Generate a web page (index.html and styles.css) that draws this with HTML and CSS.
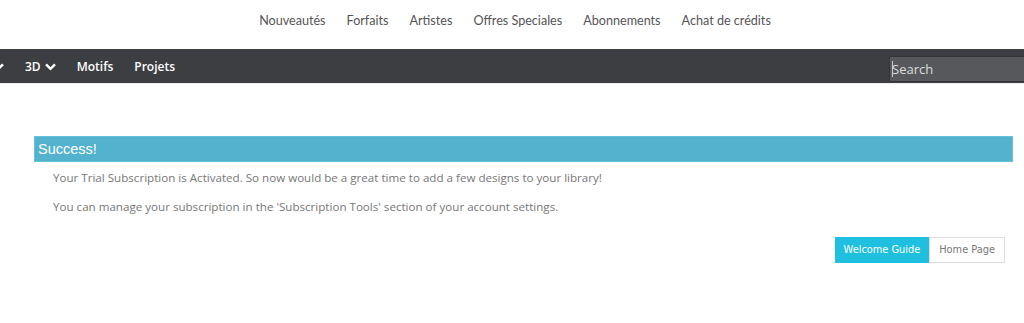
FILE: index.html
```html
<!DOCTYPE html>
<html>
<head>
<meta charset="utf-8">
<link rel="stylesheet" href="styles.css">
</head>
<body>
<header class="topnav">
  <a>Nouveautés</a>
  <a>Forfaits</a>
  <a>Artistes</a>
  <a>Offres Speciales</a>
  <a>Abonnements</a>
  <a>Achat de crédits</a>
</header>
<nav class="darkbar">
  <div class="menu">
    <span class="item cut"><svg class="chev" viewBox="0 0 11 8" width="11" height="8"><path d="M1 1.3 L5.5 5.8 L10 1.3" fill="none" stroke="#fff" stroke-width="2.4"/></svg></span>
    <span class="item">3D <svg class="chev" viewBox="0 0 11 8" width="11" height="8"><path d="M1 1.3 L5.5 5.8 L10 1.3" fill="none" stroke="#fff" stroke-width="2.4"/></svg></span>
    <span class="item">Motifs</span>
    <span class="item">Projets</span>
  </div>
  <div class="search"><span class="caret"></span>Search</div>
</nav>
<main class="content">
  <div class="success">Success!</div>
  <p class="msg">Your Trial Subscription is Activated. So now would be a great time to add a few designs to your library!</p>
  <p class="msg">You can manage your subscription in the 'Subscription Tools' section of your account settings.</p>
  <div class="actions">
    <span class="btn primary">Welcome Guide</span>
    <span class="btn">Home Page</span>
  </div>
</main>
</body>
</html>
```
FILE: styles.css
```css
html, body { margin: 0; padding: 0; background: #fff; }
body { width: 1024px; height: 323px; overflow: hidden; }
.topnav {
  height: 41px;
  display: flex;
  justify-content: center;
  align-items: center;
  gap: 21px;
  padding-left: 6px;
  font-family: Lato, "Liberation Sans", sans-serif;
  font-size: 12.6px;
  color: #555;
}
.topnav a { display: block; }
.darkbar {
  margin-top: 8px;
  height: 34px;
  background: #3d3e42;
  border-bottom: 1px solid #eee;
  display: flex;
  align-items: center;
  justify-content: space-between;
  font-family: "Open Sans", sans-serif;
  font-weight: 600;
  font-size: 12px;
  color: #fff;
}
.menu { display: flex; align-items: center; gap: 21px; margin-left: -7px; }
.item { display: flex; align-items: center; gap: 4px; }
.chev { display: block; margin-top: 1px; }
.search {
  align-self: flex-end;
  width: 135px;
  height: 26px;
  box-sizing: border-box;
  margin-bottom: 1px;
  background: #57585c;
  border: 1px solid #343538;
  border-right: none;
  font-weight: 400;
  font-size: 13px;
  color: #ddd;
  display: flex;
  align-items: center;
  padding-left: 2px;
}
.caret { width: 1px; height: 16px; background: #ccc; margin-right: -1px; }
.content { padding: 52px 11px 0 34px; }
.success {
  height: 26px;
  box-sizing: border-box;
  background: #53b2cd;
  border: 1px solid #66c2dc;
  color: #fff;
  font-family: "Liberation Sans", Arial, sans-serif;
  font-size: 14.5px;
  line-height: 24px;
  padding-left: 3px;
}
.msg {
  margin: 0;
  padding-left: 19px;
  font-family: "Open Sans", sans-serif;
  font-size: 11.6px;
  color: #777;
  line-height: 29px;
}
.msg:first-of-type { margin-top: 1px; }
.actions {
  display: flex;
  justify-content: flex-end;
  margin-top: 16px;
  margin-right: 8px;
}
.btn {
  height: 26px;
  box-sizing: border-box;
  padding: 0 9px;
  font-family: "DejaVu Sans", Verdana, sans-serif;
  font-size: 9.8px;
  line-height: 24px;
  color: #777;
  background: #fff;
  border: 1px solid #ddd;
}
.btn.primary { padding: 0 8px; background: #1fbfdf; border-color: #1fbfdf; color: #fff; }
```
